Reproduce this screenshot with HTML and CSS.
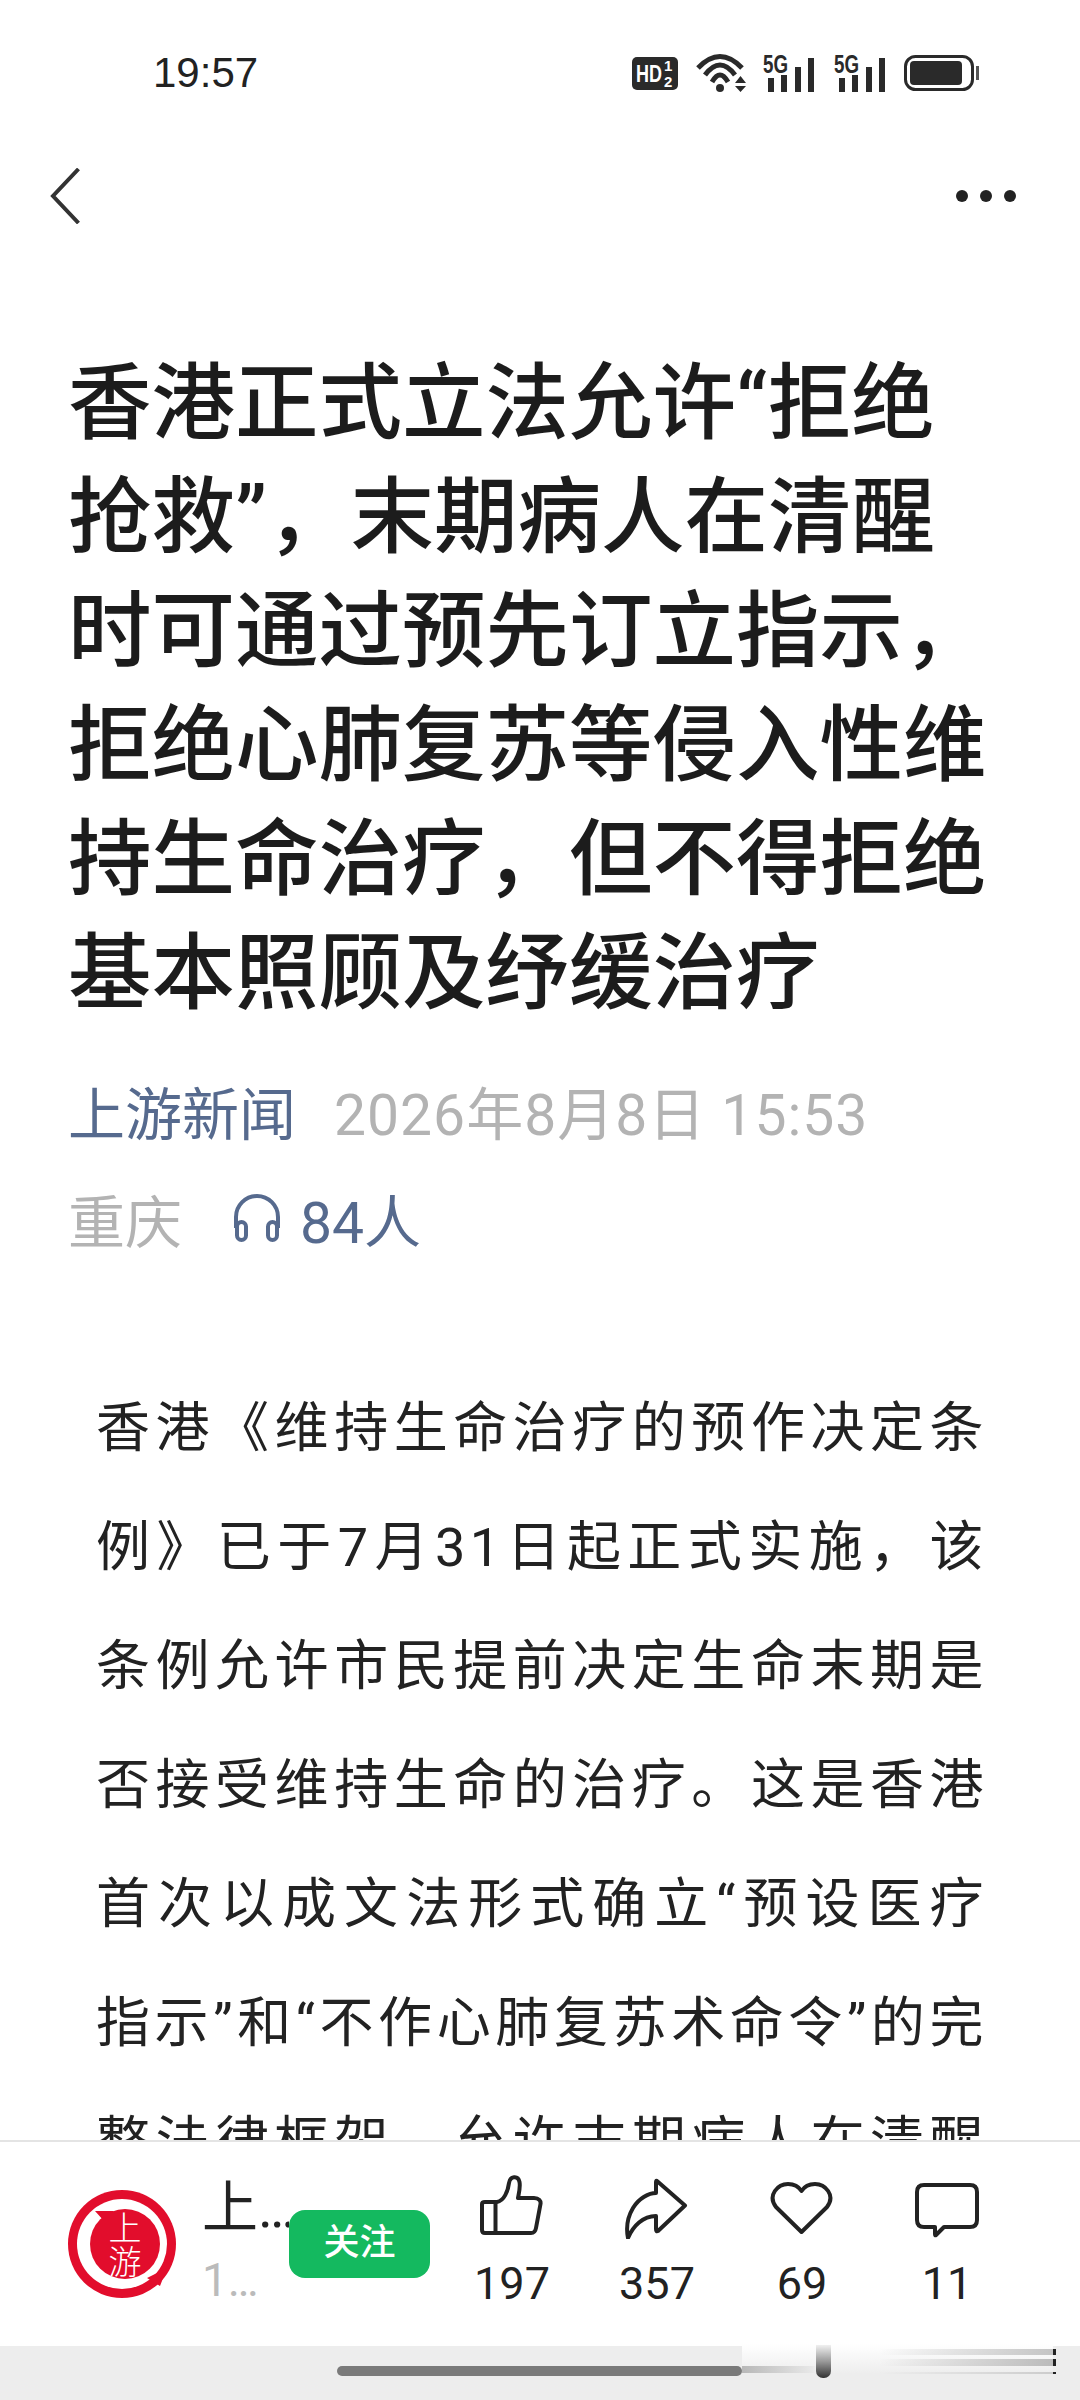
FILE: index.html
```html
<!doctype html>
<html lang="zh-CN">
<head>
    <meta charset="utf-8"/>
    <title>香港正式立法允许拒绝抢救</title>
    <link rel="stylesheet" href="styles.css">
</head>

<body>
    <div class="page">
        <!-- 状态栏 -->
        <div class="status">
            <span class="time">19:57</span>
            <div class="status-icons">
                <svg width="46" height="33" viewBox="0 0 46 33"><rect width="46" height="33" rx="5" fill="#2a2a2a"/><text x="4" y="25" class="hd" textLength="26" lengthAdjust="spacingAndGlyphs">HD</text><text x="32" y="14" class="hd-s">1</text><text x="32" y="30" class="hd-s">2</text></svg>
                <svg class="wifi" width="50" height="38" viewBox="0 0 50 38" fill="none" stroke="#2a2a2a" stroke-width="5"><path d="M2 14Q24 -9 46 14"/><path d="M9 21Q24 1 39 21"/><path d="M16 28Q24 14 32 28"/><circle cx="24" cy="34" r="4" fill="#2a2a2a" stroke="none"/><path d="M39 29h11l-5.500-7zM39 32h11l-5.500 6z" fill="#2a2a2a" stroke="none"/></svg>
                <svg width="53" height="37" viewBox="0 0 53 37"><text x="1" y="18" class="sig" textLength="25" lengthAdjust="spacingAndGlyphs">5G</text><rect x="6" y="23" width="6" height="14" fill="#2a2a2a"/><rect x="19" y="20" width="6" height="17" fill="#2a2a2a"/><rect x="33" y="12" width="6" height="25" fill="#2a2a2a"/><rect x="46" y="3" width="6" height="34" fill="#2a2a2a"/></svg>
                <svg width="53" height="37" viewBox="0 0 53 37"><text x="1" y="18" class="sig" textLength="25" lengthAdjust="spacingAndGlyphs">5G</text><rect x="6" y="23" width="6" height="14" fill="#2a2a2a"/><rect x="19" y="20" width="6" height="17" fill="#2a2a2a"/><rect x="33" y="12" width="6" height="25" fill="#2a2a2a"/><rect x="46" y="3" width="6" height="34" fill="#2a2a2a"/></svg>
                <svg width="75" height="36" viewBox="0 0 75 36"><rect x="1.500" y="1.500" width="67" height="33" rx="10" fill="none" stroke="#2a2a2a" stroke-width="3"/><rect x="6" y="6" width="52" height="24" rx="4" fill="#2a2a2a"/><rect x="72" y="11" width="3" height="14" fill="#555"/></svg>
            </div>
        </div>

        <!-- 导航 -->
        <div class="nav">
            <svg width="30" height="56" viewBox="0 0 30 56" fill="none" stroke="#333" stroke-width="4"><path d="M28.500 1L3 28L28.500 55"/></svg>
            <div class="dots"><i></i><i></i><i></i></div>
        </div>

        <div class="main">
            <h1 class="title">香港正式立法允许“拒绝抢救”，末期病人在清醒时可通过预先订立指示，拒绝心肺复苏等侵入性维持生命治疗，但不得拒绝基本照顾及纾缓治疗</h1>
            <div class="meta">
                <span class="source">上游新闻</span>
                <span class="date">2026年8月8日 15:53</span>
            </div>
            <div class="meta meta-2">
                <span class="place">重庆</span>
                <svg width="50" height="48" viewBox="0 0 50 48" fill="none" stroke="#566a8e" stroke-width="4"><path d="M4 34V23a21 21 0 0 1 42 0V34"/><rect x="5" y="28" width="9" height="18" rx="4.500"/><rect x="36" y="28" width="9" height="18" rx="4.500"/></svg>
                <span class="listen">84人</span>
            </div>
            <p class="content">香港《维持生命治疗的预作决定条例》已于7月31日起正式实施，该条例允许市民提前决定生命末期是否接受维持生命的治疗。这是香港首次以成文法形式确立“预设医疗指示”和“不作心肺复苏术命令”的完整法律框架，允许末期病人在清醒时可通过预先订立指示拒绝治疗。</p>
        </div>

        <!-- 底部栏 -->
        <div class="bar">
            <div class="author">
                <svg class="logo" width="108" height="108" viewBox="0 0 108 108"><circle cx="54" cy="54" r="54" fill="#e20d2c"/><circle cx="54" cy="54" r="45" fill="#fff"/><circle cx="57" cy="54" r="35" fill="#e20d2c"/><path d="M27 21L46 21L36 31zM79 88L99 78L92 96z" fill="#e20d2c"/><text x="57" y="50" class="logo-t">上</text><text x="57" y="84" class="logo-t">游</text></svg>
                <div class="author-info">
                    <div class="author-name">上…</div>
                    <div class="author-sub">1…</div>
                </div>
                <div class="follow">关注</div>
            </div>
            <div class="acts">
                <div class="act">
                    <svg width="64" height="64" viewBox="0 0 64 64" fill="none" stroke="#222" stroke-width="4" stroke-linejoin="round"><path d="M17 27C24 26 28 16 29 8C30 1 38 0 39.500 7C40.500 12 39 18 38 23H54C59 23 61 26 60.500 29L56 53C55.500 56 54 58 51 58H5C3 58 2 57 2 55V29C2 27.500 3 27 5 27ZM15.500 27V58"/></svg>
                    <span>197</span>
                </div>
                <div class="act">
                    <svg width="64" height="64" viewBox="0 -3 64 64" fill="none" stroke="#222" stroke-width="4" stroke-linejoin="round"><path d="M32 3L60 27.500L33 53Q31 54 31 51V38C18 38 8 48 3 60C1 50 2 40 8 30C14 20 24 15 31 15V5Q31 2 32 3Z"/></svg>
                    <span>357</span>
                </div>
                <div class="act">
                    <svg width="64" height="64" viewBox="0 -7 64 64" fill="none" stroke="#222" stroke-width="4" stroke-linejoin="round"><path d="M31.500 50L6 25C-3 13 8 2 18 2C24 2 29 5 31.500 9C34 5 39 2 45 2C55 2 66 13 57 25Z"/></svg>
                    <span>69</span>
                </div>
                <div class="act">
                    <svg width="64" height="64" viewBox="0 -8 64 64" fill="none" stroke="#222" stroke-width="4" stroke-linejoin="round"><path d="M9 2H55Q62 2 62 9V37Q62 44 55 44H29L21 52Q20 53 20 51V44H9Q2 44 2 37V9Q2 2 9 2Z"/></svg>
                    <span>11</span>
                </div>
            </div>
        </div>

        <!-- 手势条，右侧是截图留下的残影 -->
        <div class="gesture">
            <div class="handle"></div>
            <div class="ghost"></div>
            <div class="ghost-bar"></div>
            <div class="ghost-lines"></div>
        </div>
    </div>
</body>
</html>
```

FILE: styles.css
```css
* {
    padding: 0;
    margin: 0;
    box-sizing: border-box;
}

body {
    background: #fff;
    font-family: "Roboto", "Noto Sans CJK SC", sans-serif;
}

.page {
    width: 1080px;
    height: 2400px;
    display: flex;
    flex-direction: column;
    overflow: hidden;
}

.status {
    height: 146px;
    flex: none;
    display: flex;
    align-items: center;
    justify-content: space-between;
    padding: 0 101px 0 153px;
}

.time {
    font-size: 42px;
    color: #222;
    font-family: "Liberation Sans", sans-serif;
}

.status-icons {
    display: flex;
    align-items: center;
    gap: 18px;
}

.status-icons svg {
    overflow: visible;
}

.wifi {
    margin-right: -2px;
}

.hd {
    font: bold 23px "Liberation Sans", sans-serif;
    fill: #fff;
}

.hd-s {
    font: bold 15px "Liberation Sans", sans-serif;
    fill: #fff;
}

.sig {
    font: bold 25px "Liberation Sans", sans-serif;
    fill: #2a2a2a;
}

.nav {
    height: 80px;
    flex: none;
    display: flex;
    align-items: center;
    justify-content: space-between;
    padding: 0 64px 0 50px;
    margin-top: 10px;
}

.dots {
    display: flex;
    gap: 12px;
}

.dots i {
    width: 12px;
    height: 12px;
    border-radius: 50%;
    background: #222;
}

.main {
    flex: 1;
    min-height: 0;
    overflow: hidden;
    padding: 111px 0 0 68px;
}

.title {
    width: 925px;
    font-size: 83.5px;
    line-height: 114px;
    font-weight: 500;
    color: #1c1c1c;
}

.meta {
    display: flex;
    align-items: center;
    margin-top: 49px;
    height: 60px;
    font-size: 57px;
}

.source {
    color: #566a8e;
    margin-right: 38px;
}

.date {
    color: #b3b3b3;
    letter-spacing: 1px;
}

.meta-2 {
    margin-top: 48px;
}

.place {
    color: #b3b3b3;
    margin-right: 50px;
}

.listen {
    color: #566a8e;
    margin-left: 18px;
}

.content {
    width: 892px;
    margin: 121px 0 0 28px;
    font-size: 54px;
    letter-spacing: 4.5px;
    line-height: 119px;
    color: #222;
    text-align: justify;
}

.bar {
    height: 206px;
    flex: none;
    display: flex;
    border-top: 2px solid #e4e4e4;
    background: #fff;
    padding: 0 96px 0 68px;
    justify-content: space-between;
}

.author {
    display: flex;
    align-items: center;
}

.logo {
    flex: none;
}

.logo-t {
    font: 300 33px "Noto Sans CJK SC", sans-serif;
    fill: #fff;
    text-anchor: middle;
}

.author-info {
    margin-left: 26px;
    width: 87px;
    overflow: hidden;
    white-space: nowrap;
}

.author-name {
    font-size: 56px;
    color: #222;
    line-height: 72px;
}

.author-sub {
    font-size: 46px;
    color: #bbb;
    line-height: 72px;
}

.follow {
    width: 141px;
    height: 68px;
    line-height: 66px;
    border-radius: 16px;
    background: #14b95f;
    color: #fff;
    font-size: 36px;
    font-weight: 500;
    text-align: center;
}

.acts {
    display: flex;
    gap: 71px;
    padding-top: 33px;
}

.act {
    width: 74px;
    display: flex;
    flex-direction: column;
    align-items: center;
    gap: 19px;
}

.act svg {
    flex: none;
}

.act span {
    font-size: 45px;
    line-height: 52px;
    color: #222;
}

.gesture {
    height: 54px;
    flex: none;
    background: #ededed;
    padding: 20px 0 0 337px;
    position: relative;
}

.handle {
    width: 405px;
    height: 10px;
    border-radius: 5px;
    background: #7a7a7a;
}

.ghost {
    position: absolute;
    left: 742px;
    top: -2px;
    width: 311px;
    height: 30px;
    background:
        linear-gradient(to right, #b8b8b8, #e8e8e8 70px, transparent 75px) 0 22px / 100% 7px no-repeat,
        linear-gradient(to bottom, #fff, #ededed);
}

.ghost-bar {
    position: absolute;
    left: 816px;
    top: -1px;
    width: 15px;
    height: 33px;
    border-radius: 0 0 7px 7px;
    background: linear-gradient(to bottom, #f0f0f0, #999 50%, #333);
}

.ghost-lines {
    position: absolute;
    left: 880px;
    top: 3px;
    width: 176px;
    height: 25px;
    background:
        linear-gradient(to right, transparent, #c4c4c4 calc(100% - 3px), #222 calc(100% - 3px)) 0 0 / 100% 6px no-repeat,
        linear-gradient(to right, transparent, #bbb calc(100% - 3px), #222 calc(100% - 3px)) 0 10px / 100% 7px no-repeat,
        linear-gradient(to right, transparent, #ccc calc(100% - 3px), #222 calc(100% - 3px)) 0 23px / 100% 2px no-repeat;
}
```
